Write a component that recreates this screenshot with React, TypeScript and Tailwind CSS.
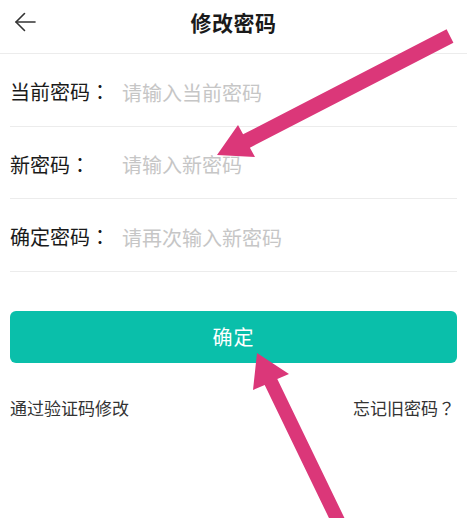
const font = { fontFamily: '"Noto Sans CJK SC", "Noto Sans", sans-serif' };
// full-width punctuation centred in its cell, as on the device
const punct = { fontFamily: '"Noto Sans CJK TC", "Noto Sans CJK SC", sans-serif' };

const fields = [
  { label: "当前密码", placeholder: "请输入当前密码", h: "h-[73px]" },
  { label: "新密码", placeholder: "请输入新密码", h: "h-[72px]" },
  { label: "确定密码", placeholder: "请再次输入新密码", h: "h-[73px]" },
];

export default function App() {
  return (
    <div
      className="relative w-[467px] h-[518px] overflow-hidden bg-white text-[#1a1a1a]"
      style={font}
    >
      <header className="relative h-[54px] border-b border-[#ececec] flex items-center justify-center pb-[9px]">
        <button className="absolute left-[12px] top-[9px] w-[26px] h-[26px] flex items-center justify-center">
          <svg width="24" height="24" viewBox="0 0 24 24" fill="none" stroke="#333" strokeWidth="1.6" strokeLinecap="round" strokeLinejoin="round">
            <path d="M22 12H3" />
            <path d="M11.5 3.5L3 12l8.5 8.5" />
          </svg>
        </button>
        <h1 className="text-[21px] font-bold leading-none tracking-[0.5px]">修改密码</h1>
      </header>

      <div className="px-[10px]">
        {fields.map((f) => (
          <label key={f.label} className={`flex items-center pt-1 border-b border-[#ececec] ${f.h}`}>
            <span className="w-[112px] shrink-0 text-[20px] leading-none">
              {f.label}
              <span style={punct}>：</span>
            </span>
            <input
              type="password"
              placeholder={f.placeholder}
              className="flex-1 text-[20px] leading-none outline-none placeholder:text-[#c6c6c6]"
            />
          </label>
        ))}

        <button className="mt-[39px] w-full h-[52px] rounded-[6px] bg-[#0abfaa] text-white text-[20px] tracking-[1px]">
          确定
        </button>

        <div className="mt-[33px] flex items-center justify-between text-[17px] leading-[24px] text-[#333]">
          <span>通过验证码修改</span>
          <span className="mr-[2px]">
            忘记旧密码<span style={punct}>？</span>
          </span>
        </div>
      </div>

      <svg className="pointer-events-none absolute inset-0" width="467" height="518" viewBox="0 0 467 518">
        <polygon
          fill="#db3779"
          points="446.6,29.3 453.4,42.7 249.9,147.7 255,157 217,155 238,125 243.1,134.3"
        />
        <polygon
          fill="#db3779"
          points="257,353 289,374 277.3,379 348.8,527 336.2,533 264.7,385 253,390"
        />
      </svg>
    </div>
  );
}
